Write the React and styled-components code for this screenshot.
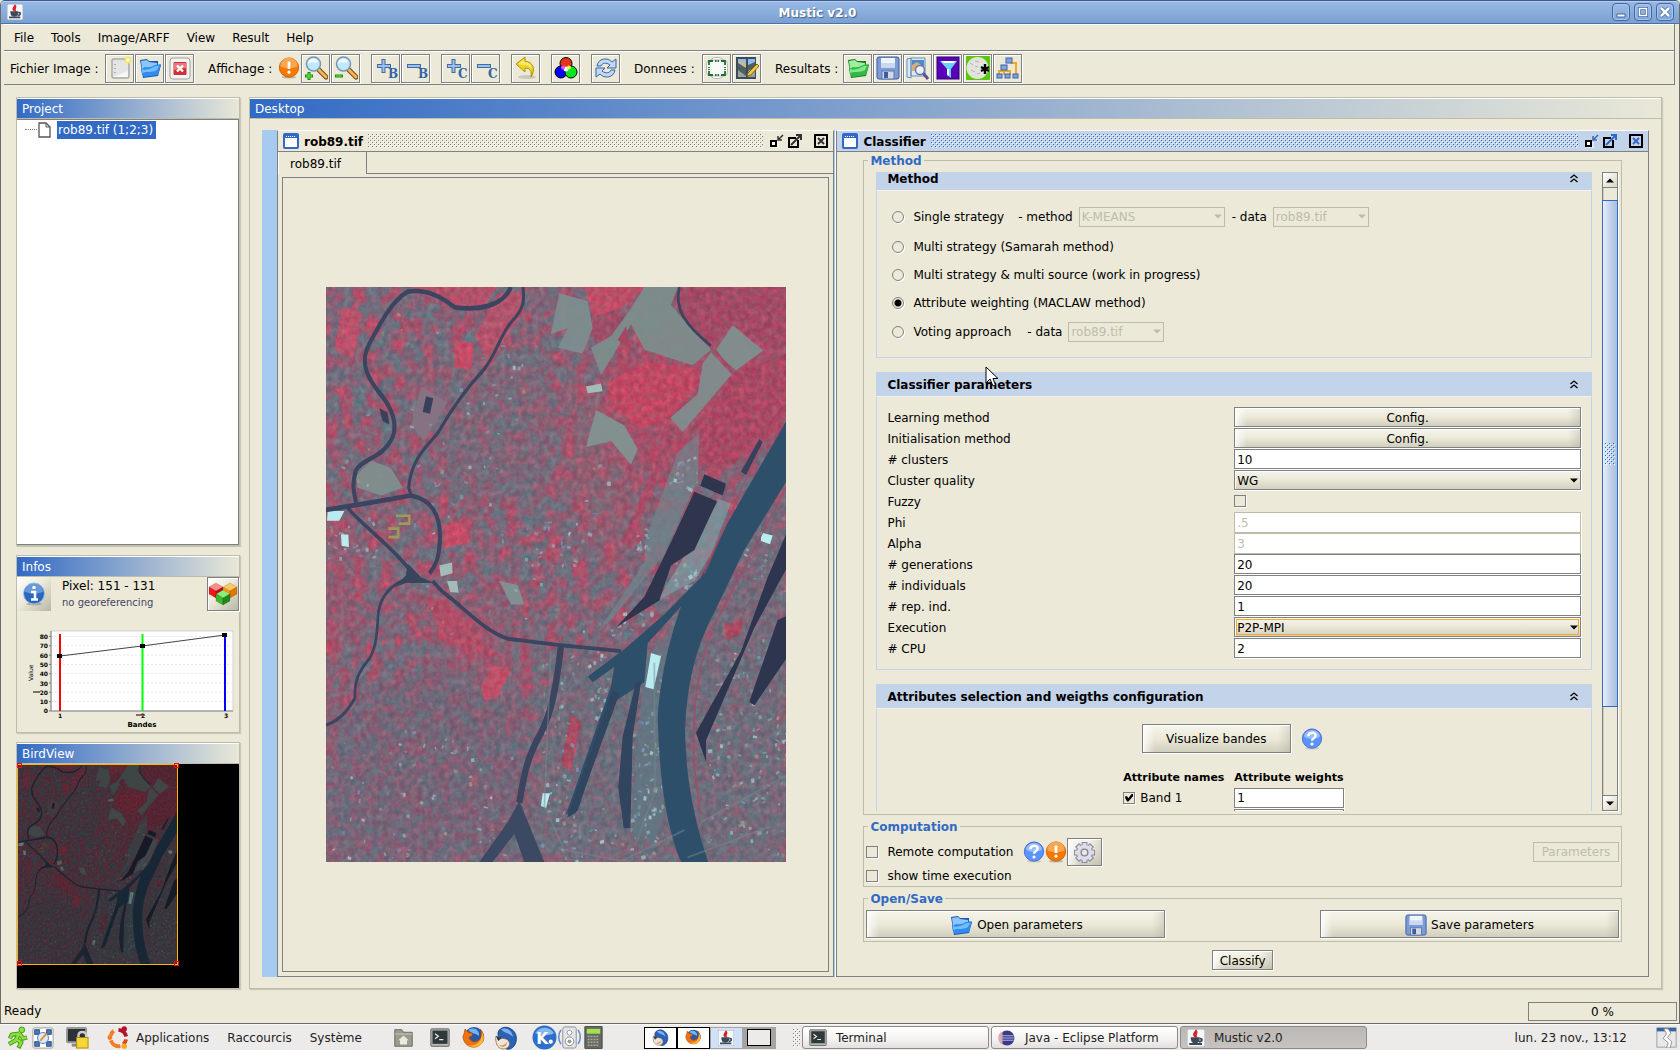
import React from "react";
import styled, { createGlobalStyle, css } from "styled-components";

const BG = "#ece9d8";
const GREY = "#808080";
const SOFT = "#bdbda9";
const BLUE = "#316ac5";
const PALE = "#c3d3e9";

const GlobalStyle = createGlobalStyle`
  *, *::before, *::after { box-sizing: border-box; }
  body { margin: 0; background: ${BG}; }
  body, button, input, select { font-family: "DejaVu Sans", sans-serif; font-size: 12px; line-height: 16px; color: #000; }
  svg { display: block; flex: none; }
`;

/* ---------- window ---------- */

const Screen = styled.div`
  display: flex;
  flex-direction: column;
  height: 100vh;
  min-height: 900px;
  background: ${BG};
`;

const Window = styled.div`
  flex: 1;
  min-height: 0;
  display: flex;
  flex-direction: column;
  border: 1px solid #6b6b6b;
  border-top: 1px solid #3f5a85;
  border-radius: 5px 5px 0 0;
`;

const TitleBar = styled.header`
  display: flex;
  align-items: center;
  height: 23px;
  padding: 0 5px 0 6px;
  border-bottom: 1px solid #4a71a8;
  border-radius: 4px 4px 0 0;
  background: linear-gradient(#9ab8e8, #8bafdb 45%, #7a9fd1);
  box-shadow: inset 0 1px 0 #b4cdf2;
`;

const TitleText = styled.h1`
  flex: 1;
  margin: 0;
  padding-top: 1px;
  text-align: center;
  font-size: 12px;
  line-height: 22px;
  color: #fff;
  text-shadow: 1px 1px 1px #41608f;
`;

const TitleButtons = styled.div`
  display: flex;
  gap: 4px;
`;

const TitleButton = styled.button`
  width: 18px;
  height: 18px;
  padding: 0;
  display: grid;
  place-items: center;
  border: 1px solid #4368a0;
  border-radius: 4px;
  background: linear-gradient(#9dbbe8, #7fa5d8);
  box-shadow: inset 0 0 0 1px #a9c4ec;
`;

const Bars = styled.div`
  margin: 0 4px 0 3px;
  border-right: 1px solid ${GREY};
`;

const MenuBar = styled.nav`
  display: flex;
  gap: 17px;
  height: 27px;
  padding: 5px 10px 0;
  border-top: 1px solid #fff;
  border-bottom: 1px solid ${GREY};
`;

const MenuItem = styled.a`
  color: #000;
  text-decoration: none;
`;

const ToolBar = styled.div`
  display: flex;
  align-items: center;
  height: 34px;
  padding-left: 6px;
  border-top: 1px solid #fff;
  border-bottom: 1px solid ${GREY};
`;

const ToolGroup = styled.div`
  display: flex;
  align-items: center;
  gap: 1px;
  margin-right: ${(p) => p.$after || 11}px;
`;

const ToolLabel = styled.span`
  width: ${(p) => p.$w}px;
  padding-top: 1px;
  white-space: nowrap;
`;

const bevel = css`
  border: 1px solid ${GREY};
  box-shadow: 1px 1px 0 #fff, inset 1px 1px 0 #fff;
`;

const ToolButton = styled.button`
  ${bevel}
  width: 29px;
  height: 29px;
  padding: 0;
  display: grid;
  place-items: center;
  background: ${BG};
`;

/* ---------- main panels ---------- */

const Main = styled.main`
  flex: 1;
  min-height: 0;
  display: grid;
  grid-template-columns: 224px minmax(0, 1fr);
  gap: 9px;
  padding: 12px 17px 6px 15px;
`;

const SideColumn = styled.div`
  min-height: 0;
  display: flex;
  flex-direction: column;
  gap: 9px;
`;

const Panel = styled.section`
  display: flex;
  flex-direction: column;
  flex: ${(p) => p.$flex || "none"};
  min-height: 0;
  min-width: 0;
  border: 1px solid ${SOFT};
  box-shadow: 1px 1px 1px #c9c7b6;
`;

const PanelTitle = styled.h2`
  margin: 0;
  height: 21px;
  padding: 2px 5px;
  border-top: 1px solid #fff;
  border-bottom: 1px solid ${SOFT};
  background: linear-gradient(90deg, ${BLUE}, #e9e8d8);
  color: #fff;
  font-size: 12px;
  font-weight: normal;
  line-height: 16px;
`;

const Tree = styled.div`
  flex: 1;
  display: flex;
  align-items: flex-start;
  padding: 1px 0 0 8px;
  background: #fff;
  border: 1px solid ${GREY};
  border-left: 0;
`;

const TreeStem = styled.span`
  width: 12px;
  margin-top: 8px;
  border-top: 1px dotted ${GREY};
`;

const TreeLabel = styled.span`
  margin-left: 5px;
  padding: 1px 3px 1px 1px;
  background: ${BLUE};
  border: 0;
  color: #fff;
`;

const InfoBody = styled.div`
  height: 155px;
  display: flex;
  flex-direction: column;
`;

const InfoTop = styled.div`
  display: flex;
  justify-content: space-between;
  height: 36px;
`;

const InfoIconBox = styled.div`
  width: 34px;
  height: 34px;
  display: grid;
  place-items: center;
  background: linear-gradient(135deg, #fff, #eceadb 45%, #b9b7a4);
`;

const CubeButton = styled.button`
  ${bevel}
  width: 32px;
  height: 34px;
  padding: 0;
  background: linear-gradient(135deg, #fff, #eceadb 45%, #b9b7a4);
`;

const InfoText = styled.div`
  flex: 1;
  padding: 1px 0 0 11px;
`;

const SmallNote = styled.div`
  font-size: 10px;
  line-height: 18px;
  color: #444466;
`;

const BirdBody = styled.div`
  height: 224px;
  background: #000;
`;

/* ---------- internal frames ---------- */

const DesktopArea = styled.div`
  flex: 1;
  min-height: 0;
  display: grid;
  grid-template-columns: minmax(0, 559fr) minmax(0, 812fr);
  margin: 11px 12px;
  border-left: 15px solid #a6caf0;
`;

const Frame = styled.article`
  display: flex;
  flex-direction: column;
  min-width: 0;
  min-height: 0;
  border: 1px solid ${GREY};
  border-top-color: #fff;
  margin-right: ${(p) => p.$gap || 0}px;
  box-shadow: ${(p) => (p.$gap ? "1px 0 0 #a6caf0, 2px 0 0 #fff" : "none")};
`;

const FrameTitle = styled.header`
  display: flex;
  align-items: center;
  height: 21px;
  padding: 0 5px;
  background: ${(p) => (p.$active ? PALE : BG)};
  border-bottom: 1px solid ${GREY};
`;

const FrameName = styled.h3`
  margin: 0 5px;
  padding-top: 1px;
  font-size: 12px;
  line-height: 16px;
`;

const Grip = styled.div`
  flex: 1;
  height: 14px;
  margin-right: 7px;
  --d: ${(p) => (p.$active ? BLUE : GREY)};
  background-image:
    conic-gradient(from 270deg at 1px 1px, var(--d) 90deg, transparent 0),
    conic-gradient(from 270deg at 1px 1px, var(--d) 90deg, transparent 0),
    conic-gradient(from 270deg at 1px 1px, #fff 90deg, transparent 0),
    conic-gradient(from 270deg at 1px 1px, #fff 90deg, transparent 0);
  background-size: 4px 4px;
  background-position: 0 0, 2px 2px, 1px 1px, 3px 3px;
`;

const FrameButton = styled.button`
  width: 14px;
  height: 14px;
  padding: 0;
  margin-left: ${(p) => p.$gap || 0}px;
  border: 0;
  background: none;
`;

const TabStrip = styled.div`
  display: flex;
  height: 22px;
`;

const Tab = styled.button`
  width: 89px;
  padding: 2px 0 0 11px;
  text-align: left;
  border: 0;
  border-right: 1px solid ${GREY};
  border-left: 1px solid #fff;
  background: ${BG};
`;

const TabRest = styled.div`
  flex: 1;
  border-bottom: 1px solid ${GREY};
`;

const ImagePane = styled.div`
  flex: 1;
  min-height: 0;
  display: grid;
  place-items: center;
  margin: 3px 4px 4px;
  border: 1px solid ${GREY};
`;

const ClassifierBody = styled.form`
  flex: 1;
  min-height: 0;
  display: flex;
  flex-direction: column;
  gap: 4px;
  padding: 1px 26px 6px;
`;

const Group = styled.fieldset`
  flex: ${(p) => (p.$grow ? "1" : "none")};
  min-height: 0;
  min-width: 0;
  margin: 0;
  padding: ${(p) => p.$pad};
  border: 1px solid ${SOFT};
  display: flex;
  flex-direction: ${(p) => (p.$row ? "row" : "column")};
  justify-content: ${(p) => (p.$row ? "space-between" : "normal")};
`;

const GroupTitle = styled.legend`
  margin-left: 2px;
  padding: 1px 2px 0;
  font-weight: bold;
  line-height: 14px;
  color: ${BLUE};
`;

const Viewport = styled.div`
  flex: 1;
  min-width: 0;
  margin-left: 10px;
  overflow: hidden;
`;

const Scrolled = styled.div`
  margin-top: -6px;
  display: flex;
  flex-direction: column;
  gap: 14px;
`;

const Section = styled.section`
  position: relative;
`;

const SectionHead = styled.header`
  display: flex;
  align-items: center;
  justify-content: space-between;
  height: 24px;
  padding: 0 14px 0 11px;
  background: ${PALE};
  border-bottom: 0;
`;

const SectionName = styled.h4`
  margin: 0;
  padding-top: 1px;
  font-size: 12px;
  line-height: 16px;
`;

const Chevron = styled.button`
  padding: 0;
  border: 0;
  background: none;
`;

const SectionBody = styled.div`
  padding: 10px;
  border: 1px solid ${PALE};
  border-top: 1px solid #f4f2e8;
`;

const RadioRow = styled.div`
  display: flex;
  align-items: center;
  height: ${(p) => p.$h || 28}px;
  padding-left: 5px;
`;

const RadioLabel = styled.label`
  display: flex;
  align-items: center;
  gap: 9px;
  padding-top: 1px;
`;

const Radio = styled.input`
  appearance: none;
  width: 12px;
  height: 12px;
  margin: 0;
  border: 1px solid ${GREY};
  border-radius: 50%;
  background: ${BG};
  box-shadow: 1px 1px 0 #fff;
  &:checked { background: radial-gradient(#000 0 3px, ${BG} 4px); }
`;

const Inline = styled.label`
  margin: 0 6px 0 ${(p) => p.$left || 14}px;
`;

const SelectBox = styled.span`
  display: inline-grid;
  width: ${(p) => p.$w || "100%"};
  height: 20px;
  align-items: center;
  & > * { grid-area: 1 / 1; }
  & > svg { justify-self: end; margin-right: 3px; pointer-events: none; }
`;

const SelectField = styled.select`
  appearance: none;
  width: 100%;
  height: 20px;
  padding: 1px 3px 0 2px;
  margin: 0;
  border: 1px solid ${GREY};
  border-radius: 0;
  background: linear-gradient(#f6f5ec, ${BG} 45%, #d3d0c0);
  box-shadow: 1px 1px 0 #fff, inset 1px 1px 0 #fff;
  outline: ${(p) => (p.$focused ? "1px solid #f7a81c" : "none")};
  outline-offset: -3px;
  &:disabled { color: ${SOFT}; border-color: ${SOFT}; background: ${BG}; box-shadow: none; opacity: 1; }
`;

const ParamGrid = styled.div`
  display: grid;
  grid-template-columns: 1fr 1fr;
  grid-auto-rows: 21px;
`;

const ParamLabel = styled.label`
  line-height: 22px;
`;

const TextField = styled.input`
  width: ${(p) => p.$w || "100%"};
  height: 20px;
  margin: 0;
  padding: 1px 2px 0;
  border: 1px solid ${GREY};
  background: #fff;
  box-shadow: 1px 1px 0 #fff;
  outline: 0;
  &:disabled { color: ${SOFT}; border-color: ${SOFT}; height: 21px; }
`;

const Check = styled.input`
  appearance: none;
  flex: none;
  width: 12px;
  height: 12px;
  margin: 0;
  border: 1px solid ${GREY};
  background: ${BG};
  box-shadow: 1px 1px 0 #fff;
  display: grid;
  place-items: center;
  &:checked::before {
    content: "";
    width: 8px;
    height: 8px;
    background: #000;
    clip-path: polygon(0 35%, 25% 35%, 38% 60%, 85% 0, 100% 10%, 100% 30%, 40% 100%, 25% 100%, 0 60%);
  }
`;

const CheckCell = styled.div`
  display: flex;
  align-items: center;
  height: 20px;
`;

const PushButton = styled.button`
  ${bevel}
  display: flex;
  align-items: center;
  justify-content: center;
  gap: 4px;
  width: ${(p) => p.$w || "100%"};
  height: ${(p) => p.$h || 20}px;
  padding: 1px 0 0;
  align-self: ${(p) => (p.$center ? "center" : "auto")};
  margin-top: ${(p) => (p.$center ? 4 : 0)}px;
  background: linear-gradient(90deg, #fffc, #fff0 12px calc(100% - 12px), #a8a69455), linear-gradient(#f6f5ec, ${BG} 50%, #d0cebd);
  &:disabled { color: ${SOFT}; border-color: ${SOFT}; background: ${BG}; box-shadow: none; }
`;

const VisualizeRow = styled.div`
  display: flex;
  justify-content: center;
  align-items: center;
  gap: 10px;
  padding: 5px 4px 15px 0;
`;

const WeightTable = styled.table`
  margin: 0 auto;
  border-collapse: collapse;
  th { width: 111px; padding: 1px 0 0; font-size: 11px; line-height: 18px; text-align: left; white-space: nowrap; }
  td { padding: 0; height: 21px; }
`;

const BandLabel = styled.label`
  display: flex;
  align-items: center;
  gap: 5px;
`;

const ScrollTrack = styled.div`
  display: flex;
  flex-direction: column;
  width: 16px;
  margin-left: 10px;
  border: 1px solid ${GREY};
  box-shadow: 1px 1px 0 #fff, inset 1px 0 0 #cfcdbd;
`;

const ScrollArrow = styled.button`
  height: 15px;
  padding: 0;
  display: grid;
  place-items: center;
  border: 0;
  border-bottom: ${(p) => (p.$down ? 0 : 1)}px solid ${GREY};
  border-top: ${(p) => (p.$down ? 1 : 0)}px solid ${GREY};
  background: linear-gradient(135deg, #fff, #d8d6c4);
`;

const ScrollThumb = styled.div`
  flex: 507;
  margin: 12px -1px 0;
  display: grid;
  place-items: center;
  border: 1px solid ${BLUE};
  background: linear-gradient(90deg, #e8f0fa, #c3d3e9 50%, #a9bfdf);
`;

const ThumbGrip = styled(Grip)`
  width: 10px;
  height: 22px;
  margin: 0;
`;

const ScrollRest = styled.div`
  flex: 88;
`;

const ComputeRow = styled.div`
  display: flex;
  align-items: center;
  height: ${(p) => p.$h}px;
`;

const ComputeLabel = styled.label`
  display: flex;
  align-items: center;
  gap: 9px;
  margin-right: 10px;
  padding-top: 1px;
`;

const PushRight = styled.span`
  flex: 1;
`;

const Pointer = styled.svg`
  position: absolute;
  left: 109px;
  top: -6px;
`;

/* ---------- status and desktop bar ---------- */

const StatusBar = styled.footer`
  display: flex;
  align-items: flex-end;
  justify-content: space-between;
  height: 26px;
  padding: 0 2px 0 3px;
  margin-bottom: 2px;
  line-height: 19px;
`;

const Progress = styled.div`
  width: 149px;
  height: 19px;
  border: 1px solid ${GREY};
  text-align: center;
  line-height: 18px;
`;

const Taskbar = styled.footer`
  display: flex;
  align-items: center;
  height: 26px;
  padding: 0 3px 0 6px;
  border-top: 1px solid #fafafa;
  background: #edebea;
`;

const Tray = styled.div`
  display: flex;
  align-items: center;
  gap: ${(p) => p.$gap || 0}px;
  margin-right: ${(p) => p.$after}px;
`;

const TaskLink = styled.a`
  display: flex;
  align-items: center;
  gap: 6px;
  color: #222;
  text-decoration: none;
`;

const PagerCell = styled.div`
  width: 33px;
  height: 22px;
  display: grid;
  place-items: center;
  border: 1px solid ${(p) => (p.$soft ? "#a6a4a2" : "#000")};
  background: ${(p) => p.$bg || "#fff"};
`;

const EmptyDesk = styled.span`
  width: 24px;
  height: 17px;
  border: 1px solid #000;
  background: #edebea;
`;

const Handle = styled(Grip)`
  flex: none;
  width: 7px;
  height: 18px;
  margin: 0 2px 0 0;
`;

const Task = styled.button`
  flex: 0 1 187px;
  height: 23px;
  margin-right: 2px;
  padding: 0 0 0 6px;
  display: flex;
  align-items: center;
  gap: 9px;
  color: #222;
  border: 1px solid #8d8a87;
  border-radius: 3px;
  background: ${(p) => (p.$active ? "linear-gradient(#bab7b4, #c6c3c0)" : "linear-gradient(#fff, #f3f2f1 60%, #e2e0de)")};
`;

const Clock = styled.time`
  margin-left: auto;
  margin-right: 29px;
  color: #222;
`;

/* ---------- small drawings ---------- */

const Arrow = ({ up, c = "#000" }) => (
  <svg width="8" height="5" viewBox="0 0 8 5"><path d={up ? "M0 4.5h8L4 .5z" : "M0 .5h8L4 4.5z"} fill={c} /></svg>
);

const Svg = ({ s = 24, children }) => <svg width={s} height={s} viewBox="0 0 24 24" fill="none">{children}</svg>;

const NewIcon = () => (
  <Svg><rect x="4" y="3" width="17" height="19" rx="1" fill="#e4e4e4" stroke="#8d8d8d" /><path d="M5 21h15v-6z" fill="#f7f7f7" /><circle cx="20" cy="4" r="3.4" fill="#f5e769" /><circle cx="20" cy="4" r="1.5" fill="#fff" /><path d="M7 8v1m0 3v1m0 3v1" stroke="#777" /></Svg>
);
const FolderIcon = ({ c1 = "#2f8cf0", c2 = "#8cc6ff", c3 = "#1a57b0" }) => (
  <Svg><path d="M2 4l7-1 2 2 9 0v4l3 0-3 11-15 2z" fill={c3} /><path d="M3 5l6-1 2 2 8 1v9L5 20z" fill={c2} /><path d="M7 11c5 1 8-1 10-2l6-1-3 11-14 2C3 18 3 13 3 13z" fill={c1} /><path d="M4 13c5 2 9-1 14-3l3 0-2 4c-5 3-10 1-15 3z" fill={c2} opacity=".8" /></Svg>
);
const CloseIcon = () => (
  <Svg><rect x="2" y="2" width="20" height="21" rx="3" fill="#f4f4f4" stroke="#a0a0a0" /><rect x="5.500" y="6" width="13" height="13" rx="1" fill="#cc2f35" /><path d="M6 7h12v5L6 14z" fill="#ea777b" /><path d="M9 9.500l6 6m0-6l-6 6" stroke="#fff" strokeWidth="2.400" /></Svg>
);
const WarnIcon = ({ s = 22 }) => (
  <Svg s={s}><ellipse cx="12" cy="22" rx="8" ry="1.5" fill="#0003" /><circle cx="12" cy="11.5" r="10.5" fill="#f57900" stroke="#ce5c00" /><path d="M2.500 10a9.500 9.500 0 0 1 19 0c-6 3-13 3-19 0z" fill="#ffb66b" opacity=".75" /><path d="M12 5v8" stroke="#fff" strokeWidth="3" /><circle cx="12" cy="16.500" r="1.700" fill="#fff" /></Svg>
);
const HelpIcon = ({ s = 22 }) => (
  <Svg s={s}><ellipse cx="12" cy="22" rx="8" ry="1.5" fill="#0002" /><circle cx="12" cy="11.500" r="10.500" fill="#5b94ff" stroke="#3c62d8" /><path d="M3 9a9.500 9.500 0 0 1 18 0c-5 4-13 4-18 0z" fill="#a9c8ff" opacity=".8" /><path d="M8 9c0-5 8-5 8-1 0 3-4 3-4 6" stroke="#fff" strokeWidth="2.600" /><circle cx="12" cy="17.500" r="1.700" fill="#fff" /></Svg>
);
const ZoomIcon = ({ minus }) => (
  <Svg><path d="M14 13l8 8" stroke="#7a4a18" strokeWidth="5" strokeLinecap="round" /><path d="M15 14l7 7" stroke="#f5b555" strokeWidth="2.800" strokeLinecap="round" /><circle cx="9.500" cy="8" r="7" fill="#bfe8fb" stroke="#7796b5" strokeWidth="1.500" /><path d="M4 8c0-6 9-7 10-2-3 2-6-1-10 2z" fill="#fff" opacity=".8" /><path d={minus ? "M1 20h8" : "M1 20h8M5 16v8"} stroke="#178d10" strokeWidth="3" /><path d={minus ? "M2 20h6" : "M2 20h6M5 17v6"} stroke="#73f04c" /></Svg>
);
const SignIcon = ({ minus, letter }) => (
  <Svg><path d={minus ? "M3 10h14" : "M3 10h14M9.500 3v14"} stroke="#3f6ca8" strokeWidth="4" /><path d={minus ? "M4 10h12" : "M4 10h12M9.500 4v12"} stroke="#9fc0e6" strokeWidth="2" /><text x="14" y="22" fontSize="12" fontFamily="DejaVu Serif" fontWeight="bold" fill="#3465a4">{letter}</text></Svg>
);
const UndoIcon = () => (
  <Svg><ellipse cx="13" cy="21" rx="9" ry="2" fill="#0002" /><path d="M2 8l9-7v4c8 1 11 8 6 16 1-6-1-9-6-9v4z" fill="#f0d321" stroke="#b09000" /><path d="M4 8l6-5v3c5 0 8 3 8 7-3-4-6-4-9-4z" fill="#fff7a0" opacity=".6" /></Svg>
);
const RgbIcon = () => (
  <Svg><g stroke="#000"><circle cx="12" cy="7.500" r="6" fill="#e4341c" /><circle cx="7" cy="16" r="6" fill="#0000f4" /><circle cx="17" cy="16" r="6" fill="#00e81b" /></g><circle cx="12" cy="13" r="2.500" fill="#fff" /><circle cx="9" cy="11.500" r="2" fill="#f04cf0" /><circle cx="15" cy="11.500" r="2" fill="#f4f04c" /></Svg>
);
const RefreshIcon = () => (
  <Svg><path d="M3 10C4 2 14 1 18 6l4-3v9h-9l3-3C12 6 8 7 7 10z" fill="#c3d8f2" stroke="#3465a4" /><path d="M21 14c-1 8-11 9-15 4l-4 3v-9h9l-3 3c4 3 8 2 9-1z" fill="#c3d8f2" stroke="#3465a4" /></Svg>
);
const SelectAreaIcon = () => (
  <Svg><rect x="6" y="1.500" width="12" height="21" rx="4" fill="#fafaf8" stroke="#bbb" /><rect x="1.500" y="4" width="21" height="16" rx="4" fill="#fafaf8cc" stroke="#bbb" /><path d="M4 9V5h4M16 5h4v4M20 15v4h-4M8 19H4v-4M10 5h1.500m1 0H14M10 19h1.500m1 0H14M4 11v1m0 1v1M20 11v1m0 1v1" stroke="#1d6d3c" strokeWidth="1.800" /></Svg>
);
const PictureEditIcon = () => (
  <Svg><rect x="1" y="1" width="20" height="22" fill="#3d4a58" /><path d="M3 3h8v8H3zM13 3h7v8h-7z" fill="#8fbcec" /><path d="M13 13h7v8h-7zM3 13h8v8H3z" fill="#98a49c" /><path d="M3 7l8 5v8l-8-6zM13 9l7-3v5l-7 4z" fill="#4e5f5f" /><path d="M3 6l4-1 4 4v3z" fill="#d9b878" /><path d="M22 8l-9 9-1 3 4-1 8-9z" fill="#f3c845" stroke="#8a6514" /></Svg>
);
const DiskIcon = ({ s = 24 }) => (
  <Svg s={s}><rect x="1" y="1" width="22" height="22" rx="2" fill="#7d9bd4" stroke="#3c5ca8" /><rect x="5" y="2" width="14" height="10" fill="#eef4fb" /><path d="M5 7h14v5H5z" fill="#c9daf0" /><rect x="6" y="15" width="12" height="8" fill="#d6d8dc" stroke="#5a78b8" /><rect x="8" y="16" width="4" height="6" fill="#3d5c9f" /></Svg>
);
const BrowseIcon = () => (
  <Svg><path d="M1 3l4-1v20l-4-1zM5 2h14v18H5z" fill="#dbe8f5" stroke="#6b8fb8" /><path d="M6 4h12v10H6z" fill="#4b8bc8" /><path d="M6 9l5-3 7 5v4H6z" fill="#d7ae7b" /><path d="M17 17l5 6" stroke="#5f4f90" strokeWidth="3" /><circle cx="14" cy="14" r="4.500" fill="#e8f1fc" stroke="#6b77a8" strokeWidth="1.500" /></Svg>
);
const FilterIcon = () => (
  <Svg><rect x="1" y="1" width="22" height="22" fill="#5a00b8" stroke="#31007a" /><path d="M4 5h17l-6 8v9l-4-3v-6z" fill="#69d2fb" /><path d="M5 5h15l-3 2H8z" fill="#fff" /><path d="M11 13h2v7l-2-1z" fill="#e8fbff" /></Svg>
);
const GlobeCutIcon = () => (
  <Svg><rect width="24" height="24" rx="1" fill="#5cc60a" /><circle cx="11.500" cy="12" r="11" fill="#e3e3dd" /><path d="M4 7l3 2M9 5l4 1M5 14l4 2M11 18l3-1M9 10l3 1" stroke="#b5b5ac" /><path d="M19 8v10m-4-7l8 4m-8 0l8-4" stroke="#000" strokeWidth="2.400" /></Svg>
);
const TreeIcon = () => (
  <Svg><path d="M8 12v7M3 19v-4h11v4M15 7h5v11" stroke="#f4a820" strokeWidth="2" /><g fill="#7ea5e0" stroke="#3b62a5"><rect x="10" y="2" width="6" height="5" /><rect x="5" y="9" width="6" height="5" /><rect x="1" y="18" width="5" height="4" /><rect x="9" y="18" width="5" height="4" /><rect x="17" y="18" width="5" height="4" /></g></Svg>
);
const GearIcon = () => (
  <Svg s={23}><g stroke="#8587a0" strokeWidth="6"><path d="M12 1v22M1 12h22M4.200 4.200l15.600 15.600M19.800 4.200L4.200 19.800" /></g><circle cx="12" cy="12" r="9" fill="#8587a0" /><g stroke="#dcdde9" strokeWidth="4"><path d="M12 2v20M2 12h20M5 5l14 14M19 5L5 19" /></g><circle cx="12" cy="12" r="8" fill="#dcdde9" /><circle cx="12" cy="12" r="3.500" fill={BG} stroke="#8587a0" strokeWidth="1.500" /></Svg>
);
const JavaIcon = ({ s = 16 }) => (
  <Svg s={s}><rect width="24" height="24" rx="2" fill="#f5f7f8" stroke="#80939c" /><path d="M5 11h12c0 6-2 8-6 8s-6-2-6-8z" fill="#3a4a58" /><path d="M17 13c4-1 4 4-1 4M3 20h17" stroke="#3a4a58" strokeWidth="2.500" /><path d="M12 2c4 4-3 5 1 9-6-2-4-5-1-9z" fill="#d82222" stroke="#d82222" strokeWidth="2" /></Svg>
);
const FrameIcon = () => (
  <svg width="16" height="16" viewBox="0 0 16 16"><rect x="1" y="1" width="14" height="14" rx="1" fill="#fff" stroke={BLUE} strokeWidth="2" /><path d="M1 1h14v4H1z" fill={BLUE} /><path d="M3 3.500h10" stroke="#fff" strokeDasharray="1 1" /></svg>
);
const MinFrame = ({ c }) => (
  <svg width="14" height="14" viewBox="0 0 14 14" fill="none"><path d="M2 14h6V8M8 6.500h5" stroke="#fff" /><rect x="1" y="7" width="5" height="5" stroke="#000" strokeWidth="2" fill="#fff" /><path d="M13 1L9 5M8 2v4h4" stroke={c} strokeWidth="1.500" /></svg>
);
const MaxFrame = ({ c }) => (
  <svg width="14" height="14" viewBox="0 0 14 14" fill="none"><path d="M8 4H1v9h9V6" stroke="#000" strokeWidth="2" /><path d="M3 11L13 1M8 1h5v5" stroke={c} strokeWidth="2" /></svg>
);
const CloseFrame = ({ c }) => (
  <svg width="14" height="14" viewBox="0 0 14 14" fill="none"><rect x="1" y="1" width="12" height="12" stroke="#000" strokeWidth="2" /><path d="M4 4l6 6m0-6l-6 6" stroke={c} strokeWidth="2" /></svg>
);
const ChevronsUp = () => (
  <svg width="8" height="9" viewBox="0 0 8 9" fill="none" stroke="#000" strokeWidth="1.300"><path d="M.5 4L4 1l3.500 3M.5 8L4 5l3.500 3" /></svg>
);
const Cubes = () => {
  const cube = (x, y, a, b, c) => (
    <g transform={`translate(${x} ${y})`} stroke="#0004" strokeWidth=".5"><path d="M7 0l7 4-7 4-7-4z" fill={a} /><path d="M0 4l7 4v7l-7-4z" fill={b} /><path d="M14 4l-7 4v7l7-4z" fill={c} /></g>
  );
  return <svg width="30" height="32" viewBox="0 0 30 32">{cube(1, 5, "#ff8a8a", "#f01818", "#c00c10")}{cube(15, 5, "#ffc860", "#ff9a10", "#e07800")}{cube(8, 12, "#8cec7c", "#3cb82c", "#1d8a18")}</svg>;
};
const InfoIcon = () => (
  <Svg><ellipse cx="12" cy="22" rx="8" ry="1.500" fill="#0003" /><circle cx="12" cy="11.500" r="10.500" fill="#2b67bd" stroke="#9ebee8" /><path d="M3 10a9 9 0 0 1 18 0c-6 2-12 2-18 0z" fill="#84aee6" opacity=".7" /><circle cx="12" cy="5.500" r="1.800" fill="#fff" /><path d="M9 10h4v7M9 17.500h7" stroke="#fff" strokeWidth="2.500" /></Svg>
);

/* dock drawings */
const Runner = () => (<Svg s={23}><g strokeLinejoin="round"><path d="M14 8L6 9l-2 4M14 8l4 5 4-1M13 9l-3 6-7 4M11 14l5 3-3 6" stroke="#4a9a22" strokeWidth="4.500" /><path d="M14 8L6 9l-1.500 3.500M14 8l4 5 3.500-1M13 9l-3 6-6.500 3.500M11 14l5 3-2.500 5" stroke="#8ae234" strokeWidth="2.500" /></g><circle cx="16.500" cy="4" r="3" fill="#8ae234" stroke="#4a9a22" /></Svg>);
const Capture = () => (<Svg s={22}><rect x="1" y="1" width="22" height="22" rx="2" fill="#fff" stroke="#999" /><g fill="#4b78b8" stroke="#24487f"><rect x="3" y="3" width="5" height="5" /><rect x="16" y="3" width="5" height="5" /><rect x="3" y="16" width="5" height="5" /><rect x="16" y="16" width="5" height="5" /></g><circle cx="12" cy="12" r="6" fill="#dcebf8" stroke="#4b78b8" /><path d="M9 15l7-8" stroke="#e28c22" strokeWidth="2" /></Svg>);
const LockScreen = () => (<Svg s={23}><rect x="1" y="2" width="20" height="15" rx="1" fill="#2b3336" stroke="#999" strokeWidth="2" /><path d="M6 20h7" stroke="#888" strokeWidth="3" /><path d="M13 13v-3c0-5 8-5 8 0v3" stroke="#ccc" strokeWidth="2.500" /><rect x="11" y="12" width="12" height="11" fill="#f6d636" stroke="#ad8a00" /></Svg>);
const Ubuntu = () => (<Svg s={23}><path d="M7 5a9 9 0 0 0-3 5M4 15a9 9 0 0 0 10 6" stroke="#f47b20" strokeWidth="4" /><path d="M12 4a9 9 0 0 1 8 7" stroke="#b5122b" strokeWidth="4" /><path d="M20 14a9 9 0 0 1-3 5" stroke="#de4814" strokeWidth="4" /><circle cx="3" cy="12" r="2.500" fill="#f47b20" /><circle cx="18" cy="3" r="2.800" fill="#b5122b" /><circle cx="18" cy="21" r="2.800" fill="#f5a623" /></Svg>);
const HomeFolder = () => (<Svg s={21}><path d="M2 3h8l2 3h10v16H2z" fill="#9a9c8c" stroke="#63655a" /><path d="M2 8h20" stroke="#c9cbbd" /><path d="M12 10l6 5h-2v5H8v-5H6z" fill="#e9ebdf" /></Svg>);
const Term = ({ s = 20 }) => (<Svg s={s}><rect x="1" y="1" width="22" height="21" rx="1" fill="#b5b7b0" stroke="#555" /><rect x="3" y="3" width="18" height="16" fill="#30393a" /><path d="M6 7l4 3-4 3M11 14h5" stroke="#e5ebe8" strokeWidth="1.500" /></Svg>);
const Fox = ({ s = 24 }) => (<Svg s={s}><circle cx="12" cy="11" r="10" fill="#2c58a5" /><path d="M6 4c6-4 12 0 11 6-4-3-7-2-11-6z" fill="#6cb6ef" /><path d="M2 8L3 3l4 4c3-1 4 1 3 3l-3 1c1 6 9 7 12 0 1-3 0-5-1-8 5 5 5 12 0 16-6 5-17 1-17-9z" fill="#ef7411" stroke="#b74205" strokeWidth=".7" /><path d="M20 6c3 5 2 11-3 14-4 2-8 1-11-1 8 2 14-3 14-13z" fill="#fbb53a" /></Svg>);
const Bird = ({ s = 24 }) => (<Svg s={s}><path d="M4 9C3 2 12-1 17 3c6 3 7 12 3 17-3 4-7 4-9 2 4-2 5-5 3-8-3-3-9 0-10-5z" fill="#2a62b8" stroke="#12386f" strokeWidth=".8" /><path d="M2 10c2 2 6 2 10 3 4 2 5 6 1 9-3 2-8 1-10-3-1-3-2-6-1-9z" fill="#f0e4d4" stroke="#8e6f50" strokeWidth=".8" /><path d="M7 3c5-2 11 1 12 8-3-4-8-3-12-8z" fill="#7fb0ee" /><path d="M2 10l6 2-4 3z" fill="#2d3b52" /><path d="M5 19c3 1 6 0 8-3 0 4-4 7-8 3z" fill="#c89a66" /></Svg>);
const KIcon = () => (<Svg s={25}><circle cx="12" cy="12" r="11.500" fill="#2d6fcb" /><path d="M3 8c5-8 15-6 18 0-6 3-12 2-18 0z" fill="#89b8ed" /><text x="4" y="18" fontSize="15" fontFamily="DejaVu Sans" fontWeight="bold" fill="#fff">K</text><circle cx="18" cy="16" r="2" fill="#fff" /></Svg>);
const Speaker = () => (<Svg s={23}><rect x="5" y="1" width="14" height="22" rx="2" fill="#e4e5e8" stroke="#8d9199" /><circle cx="12" cy="7" r="2.500" stroke="#999" fill="#fff" /><circle cx="12" cy="16" r="4.500" stroke="#888" fill="#fff" /><circle cx="12" cy="16" r="2" fill="#999" /><path d="M3 4c-3 5-3 10 0 15M21 4c3 5 3 10 0 15" stroke="#5d89d0" strokeWidth="1.500" /></Svg>);
const Calc = () => (<Svg s={23}><rect x="3" y="0" width="18" height="24" rx="1" fill="#666960" stroke="#444" /><rect x="5" y="3" width="14" height="5" fill="#a4e34d" /><path d="M6 11h12M6 14h12M6 17h12M6 20h12" stroke="#a9aba4" strokeWidth="1.500" strokeDasharray="2 1" /></Svg>);
const Eclipse = () => (<Svg s={18}><circle cx="12" cy="12" r="10" fill="#3c3a86" /><path d="M6 3a10 10 0 0 0 0 18z" fill="#e8a3a6" /><path d="M3 9h18M2 12h20M3 15h18" stroke="#aab3e4" strokeWidth="1.500" /></Svg>);
const Torn = () => (<Svg s={21}><rect x="1" y="1" width="22" height="22" fill="#e8e8e8" stroke="#999" /><path d="M1 1h22v4H1z" fill="#3465a4" /><path d="M9 2l3 6-4 5 6 5-2 6h4l2-7-5-5 4-5-3-5z" fill="#fff" stroke="#888" /></Svg>);

/* ---------- false-colour satellite view ---------- */

const specks = (() => {
  let seed = 7;
  const rnd = () => ((seed = (seed * 16807) % 2147483647) / 2147483647);
  const out = [];
  const zones = [
    [50, 620, 200, 750, 26], [640, 650, 810, 760, 22], [690, 990, 800, 1520, 52], [830, 980, 900, 1150, 22],
    [960, 990, 1060, 1450, 60], [1160, 950, 1425, 1240, 60], [1070, 480, 1160, 560, 20], [970, 660, 1010, 720, 14],
    [1080, 750, 1160, 820, 26], [1260, 600, 1425, 830, 20], [60, 1180, 600, 1510, 70], [1190, 1240, 1425, 1510, 50],
    [780, 1380, 1040, 1510, 34], [60, 100, 640, 560, 40], [300, 500, 900, 950, 40], [860, 850, 1030, 940, 22],
  ];
  const tones = ["#b9e4e8", "#9ccfd4", "#8db5b2", "#a9c9d8", "#7fa6d8", "#a7a98f"];
  zones.forEach(([x1, y1, x2, y2, n]) => {
    for (let i = 0; i < n; i += 1) {
      out.push({ x: x1 + rnd() * (x2 - x1), y: y1 + rnd() * (y2 - y1), w: 4 + rnd() * 9, h: 3 + rnd() * 8, c: tones[Math.floor(rnd() * 6)], o: 0.25 + rnd() * 0.45, r: rnd() * 60 - 30 });
    }
  });
  return out;
})();

const Satellite = ({ id, width, height, dim }) => (
  <svg width={width} height={height} viewBox="45 44 1380 1478" preserveAspectRatio="none" fill="none" role="img" aria-label="rob89.tif">
    <defs>
      <filter id={`${id}a`} x="0" y="0" width="100%" height="100%" colorInterpolationFilters="sRGB">
        <feTurbulence type="fractalNoise" baseFrequency="0.024" numOctaves="5" seed="4" />
        <feColorMatrix values="1 0 0 0 0  1 0 0 0 0  1 0 0 0 0  0 0 0 0 1" />
        <feComponentTransfer>
          <feFuncR type="table" tableValues=".36 .37 .38 .42 .52 .66 .78 .84 .84" />
          <feFuncG type="table" tableValues=".52 .50 .48 .45 .39 .32 .28 .27 .27" />
          <feFuncB type="table" tableValues=".56 .54 .53 .51 .47 .42 .39 .38 .38" />
        </feComponentTransfer>
      </filter>
      <filter id={`${id}b`} x="0" y="0" width="100%" height="100%" colorInterpolationFilters="sRGB">
        <feTurbulence type="fractalNoise" baseFrequency="0.06" numOctaves="3" seed="11" />
        <feColorMatrix values="1 0 0 0 0  0 1 0 0 0  .4 .6 0 0 0  0 0 0 0 1" />
        <feComponentTransfer>
          <feFuncR type="table" tableValues=".22 .26 .32 .38 .50 .64 .80 .84 .84" />
          <feFuncG type="table" tableValues=".20 .22 .26 .32 .40 .48 .56 .60 .60" />
          <feFuncB type="table" tableValues=".26 .30 .34 .40 .47 .54 .60 .64 .64" />
        </feComponentTransfer>
      </filter>
      <filter id={`${id}s`} x="-5%" y="-5%" width="110%" height="110%"><feGaussianBlur stdDeviation="2" /></filter>
      <filter id={`${id}t`} x="-20%" y="-20%" width="140%" height="140%"><feGaussianBlur stdDeviation="24" /></filter>
      <clipPath id={`${id}c`}><rect x="45" y="44" width="1380" height="1478" /></clipPath>
    </defs>
    <g clipPath={`url(#${id}c)`}>
      <rect x="45" y="44" width="1380" height="1478" filter={`url(#${id}a)`} />
      <g filter={`url(#${id}t)`}>
        <path d="M45 1160L200 1060 420 1000 660 1100 620 1522H45z" fill="#67687a" opacity=".6" />
        <path d="M720 990H1425V1522H640z" fill="#62737f" opacity=".75" />
        <path d="M1425 560V1000H1100L1240 800z" fill="#68717d" opacity=".7" />
        <path d="M450 200L700 180 720 600 400 560 360 420z" fill="#706e7c" opacity=".5" />
        <path d="M860 240L1180 60 1425 44V440L1180 520 960 520z" fill="#c83a5a" opacity=".65" />
        <path d="M760 260L950 380 980 620 900 780 740 560z" fill="#b05468" opacity=".4" />
        <path d="M45 600L120 640 130 960 45 1000zM330 830L560 860 620 1080 420 1010z" fill="#bd4863" opacity=".5" />
      </g>
      <g filter={`url(#${id}s)`}>
        <path d="M1110 44H1425V200L1360 206 1265 140 1205 200 1120 130 1095 90z" fill="#b13f60" />
        <path d="M890 290L1000 235 1165 255 1160 300 1080 375 990 410 900 350z" fill="#d93c5c" />
        <path d="M1270 265L1425 215V380L1350 450 1230 520 1150 470 1180 390z" fill="#bb3d5c" />
        <path d="M95 95L155 110 125 230 70 200z" fill="#d54a66" />
        <path d="M820 44H1010L930 100 850 125z" fill="#d64562" />
        <path d="M560 60L635 60 640 110 580 180 540 250 490 170z" fill="#c64d67" />
        <path d="M300 44H560L520 90 430 95 380 60z" fill="#c84a65" />
        <path d="M1000 620L1100 440 1180 390 1060 420 1010 540 930 700 960 720z" fill="#b64562" />
        <path d="M840 120L930 100 940 150 880 185 835 170z" fill="#a94562" />
        <path d="M395 655L460 650 480 700 400 715zM430 180L490 190 480 260 430 250z" fill="#e14260" />
        <path d="M510 1070L545 1020 600 1020 560 1100 520 1105z" fill="#dc4764" />
        <path d="M340 840L410 850 520 960 580 1000 400 960z" fill="#c24460" />
        <path d="M1240 910L1295 900 1290 940 1245 950zM780 1140L810 1160 780 1290 750 1270z" fill="#b84058" />
      </g>
      <rect x="45" y="44" width="1380" height="1478" filter={`url(#${id}b)`} opacity=".3" />
      <g filter={`url(#${id}s)`} opacity=".92">
        <path d="M1265 142L1357 207 1270 262 1215 205z" fill="#7f9290" />
        <path d="M1200 212L1262 268 1115 417 1078 380 1160 320 1175 240z" fill="#7f8f8f" />
        <path d="M745 60L830 80 845 150 815 215 740 200 770 150 720 165z" fill="#7d8f90" />
        <path d="M1000 44H1100L1080 90 1120 130 1200 205 1145 245 1000 205 960 140 920 200 870 270 840 200 900 170 960 100z" fill="#7b8f8d" />
        <path d="M920 180L945 145 960 205z" fill="#a94562" />
        <path d="M855 360L940 400 980 460 960 500 900 440 825 455z" fill="#819593" />
        <path d="M135 530L180 490 240 510 275 560 210 580 140 560z" fill="#81908f" />
        <path d="M300 400L330 300 410 340 340 440z" fill="#857484" />
        <path d="M565 800L620 810 640 860 600 860z" fill="#829494" />
      </g>
      <g filter={`url(#${id}s)`} opacity=".7">
        <path d="M1165 420L1160 540 1060 730 900 900 860 930 1010 740 1000 700 1100 470z" fill="#71858c" />
        <path d="M1225 590L1260 600 1200 730 1150 800 1040 850 1130 720z" fill="#7f9ca2" />
        <path d="M1100 900L1060 1000 1040 1200 1060 1400 1030 1480 960 1440 1000 1000z" fill="#607985" />
      </g>
      <g>
        {specks.map((s, i) => <rect key={i} x={s.x} y={s.y} width={s.w} height={s.h} fill={s.c} opacity={s.o} transform={`rotate(${s.r} ${s.x} ${s.y})`} />)}
        <g filter={`url(#${id}s)`}>
          <path d="M1020 985l30 8-22 85-25-6zM695 1345l22 0-12 38-15-5zM50 620h50l-15 25H48zM90 680l22 0 2 32-22-2zM1350 675l35 8-8 22-27-8z" fill="#b9ecf0" />
          <path d="M385 760l38-8 2 28-36 8zM408 800l30 0 5 30-25-2zM825 300l45-8 5 20-45 5z" fill="#a3bcb8" />
          <path d="M255 632h40v20h-32M232 665h30v22h-30" stroke="#a09a58" strokeWidth="7" />
        </g>
      </g>
      <g filter={`url(#${id}s)`} strokeLinejoin="round">
        <g stroke="#3a4460" strokeWidth="12">
          <path d="M600 44C575 95 500 105 430 96 380 60 330 50 290 56 240 80 200 150 175 190 150 230 160 265 200 310 240 350 262 390 245 430 210 490 160 480 135 515 122 550 128 570 135 598" />
          <path d="M636 44C640 75 640 100 605 130 570 160 560 210 520 255 470 300 420 360 380 420 340 460 300 490 293 560L300 578" strokeWidth="9" />
          <path d="M45 617L110 608 200 595 300 580C360 590 392 630 386 700 384 740 375 760 355 780" />
          <path d="M110 612C170 670 230 700 295 770M365 800L395 828C450 860 520 930 590 948L740 964 930 980" strokeWidth="10" />
          <path d="M290 795C240 805 210 840 202 880 198 940 195 970 175 1000 140 1035 130 1060 132 1100 110 1135 80 1160 45 1170" strokeWidth="8" />
          <path d="M1105 44C1090 100 1120 140 1200 195" strokeWidth="8" />
          <path d="M750 965C735 1080 720 1140 690 1190 650 1250 640 1290 625 1370" strokeWidth="19" />
        </g>
        <path d="M290 755L330 790 370 805 285 805 250 815 285 785z" fill="#37455c" />
        <path d="M1180 525L1245 550 1235 580 1168 555zM1150 570L1218 595 1150 720 1080 760 1045 850 940 905 915 920 1000 840 1080 700z" fill="#2d344e" />
        <path d="M1425 390V545L1300 720 1210 880C1150 980 1130 1060 1122 1180 1125 1290 1140 1390 1192 1522H1110C1060 1420 1045 1290 1040 1150 1050 1030 1080 940 1110 865L1010 960 1000 1060 910 1110 800 1390 765 1400 900 1070 910 1020 845 1060 830 1045 940 975 1060 885 1170 790 1250 650z" fill="#2f506b" />
        <path d="M905 1080L925 1090 795 1395 768 1408zM975 1060L990 1060 965 1200 962 1300 958 1435 938 1435 922 1330 935 1200z" fill="#30445f" />
        <path d="M1425 680V770L1330 920 1185 1210 1185 1265 1155 1190 1290 980 1370 790zM1425 890V1000L1330 1120 1315 1110 1400 900z" fill="#2d3450" />
        <path d="M625 1365L700 1522H640L610 1450 545 1522H505L590 1420z" fill="#3a4a62" />
        <path d="M345 325l22 5-10 40-22-5zM205 355l25 12 5 30-20-8zM1345 435l10 8-50 85-15-10z" fill="#39415c" />
      </g>
      <path d="M1425 350C1330 480 1270 600 1180 780M1425 560L1230 880C1150 1000 1125 1200 1170 1400M1240 235l40 30M1300 330l125-30" stroke="#a64a66" strokeWidth="5" opacity=".8" />
      <path d="M1030 1010l2 330-60 140M1170 1420l255-120M1130 1510l250-80M720 980l-20 400 60 110 170 30 190-80" stroke="#788790" strokeWidth="5" opacity=".5" />
    </g>
    {dim && <rect x="45" y="44" width="1380" height="1478" fill="#000" opacity=".5" />}
  </svg>
);

const BirdFrame = styled.div`
  position: relative;
  width: 161px;
  height: 201px;
  border: 1px solid #ffb40a;
`;

const Corner = styled.span`
  position: absolute;
  width: 5px;
  height: 5px;
  border: 1px solid #f00;
  ${(p) => p.$y}: -2px;
  ${(p) => p.$x}: ${(p) => (p.$x === "left" ? -1 : -2)}px;
`;

const Chart = () => (
  <svg width="222" height="119" viewBox="0 0 222 119" fontFamily="DejaVu Sans" fontSize="6" fontWeight="bold">
    <rect x="34" y="18" width="182" height="80" fill="#fff" stroke="#d2d2d2" />
    {[80, 70, 60, 50, 40, 30, 20, 10, 0].map((v, i) => (
      <g key={v}>
        <path d={`M34 ${23.500 + i * 9.300}H216`} stroke="#e6e6e6" strokeDasharray="2 2" />
        <text x="31" y={26 + i * 9.300} textAnchor="end">{v}</text>
        <path d={`M32 ${23.500 + i * 9.300}h2`} stroke={GREY} />
      </g>
    ))}
    <path d="M34 18v80h182" fill="none" stroke={GREY} />
    <path d="M43 21v77" stroke="#f00" strokeWidth="2" />
    <path d="M125.500 21v77" stroke="#0f0" strokeWidth="2" />
    <path d="M208 21v77" stroke="#00f" strokeWidth="2" />
    <path d="M43 43l82-10 83-11" fill="none" stroke="#444" />
    <path d="M40 41h5v4h-5zM123 31h5v4h-5zM205 20h5v4h-5z" />
    <text x="43" y="105" textAnchor="middle">1</text>
    <text x="126" y="105" textAnchor="middle">2</text>
    <text x="209" y="105" textAnchor="middle">3</text>
    <text x="125" y="114" fontSize="7" textAnchor="middle">Bandes</text>
    <text transform="translate(16 68) rotate(-90)" fontWeight="normal">Value</text>
    <path d="M16 79h7M119 102h7" stroke="#000" />
  </svg>
);

/* ---------- pieces ---------- */

const Tool = ({ label, children }) => <ToolButton type="button" aria-label={label}>{children}</ToolButton>;

const FrameHeader = ({ name, active }) => {
  const c = active ? BLUE : "#333";
  return (
    <FrameTitle $active={active}>
      <FrameIcon />
      <FrameName>{name}</FrameName>
      <Grip $active={active} />
      <FrameButton type="button" aria-label="Minimize"><MinFrame c={c} /></FrameButton>
      <FrameButton type="button" aria-label="Maximize" $gap={4}><MaxFrame c={c} /></FrameButton>
      <FrameButton type="button" aria-label="Close" $gap={12}><CloseFrame c={c} /></FrameButton>
    </FrameTitle>
  );
};

const Combo = ({ id, value, w, disabled, focused }) => (
  <SelectBox $w={w}>
    <SelectField id={id} disabled={disabled} $focused={focused} defaultValue={value}><option>{value}</option></SelectField>
    <Arrow c={disabled ? SOFT : "#000"} />
  </SelectBox>
);

const Collapsible = ({ title, children, extra }) => (
  <Section>
    <SectionHead>
      <SectionName>{title}</SectionName>
      <Chevron type="button" aria-label="Collapse"><ChevronsUp /></Chevron>
    </SectionHead>
    <SectionBody>{children}</SectionBody>
    {extra}
  </Section>
);

const Strategy = ({ label, h, checked, children }) => (
  <RadioRow $h={h}>
    <RadioLabel><Radio type="radio" name="strategy" defaultChecked={checked} />{label}</RadioLabel>
    {children}
  </RadioRow>
);

const params = [
  ["Learning method", "button", "Config."],
  ["Initialisation method", "button", "Config."],
  ["# clusters", "text", "10"],
  ["Cluster quality", "select", "WG"],
  ["Fuzzy", "check"],
  ["Phi", "off", ".5"],
  ["Alpha", "off", "3"],
  ["# generations", "text", "20"],
  ["# individuals", "text", "20"],
  ["# rep. ind.", "text", "1"],
  ["Execution", "select", "P2P-MPI", true],
  ["# CPU", "text", "2"],
];

const ParamControl = ({ id, kind, value, focused }) => {
  if (kind === "button") return <PushButton id={id} type="button">{value}</PushButton>;
  if (kind === "select") return <Combo id={id} value={value} focused={focused} />;
  if (kind === "check") return <CheckCell><Check id={id} type="checkbox" /></CheckCell>;
  return <TextField id={id} defaultValue={value} disabled={kind === "off"} />;
};

export default function App() {
  return (
    <Screen>
      <GlobalStyle />
      <Window>
        <TitleBar>
          <JavaIcon />
          <TitleText>Mustic v2.0</TitleText>
          <TitleButtons>
            <TitleButton aria-label="Minimize"><svg width="12" height="12"><path d="M2 8h8v3H2z" fill="#fff" stroke="#4368a0" /></svg></TitleButton>
            <TitleButton aria-label="Maximize"><svg width="12" height="12" fill="none"><path d="M2.500 2.500h7v7h-7z" stroke="#4368a0" strokeWidth="3" /><path d="M2.500 2.500h7v7h-7z" stroke="#fff" strokeWidth="1.500" /></svg></TitleButton>
            <TitleButton aria-label="Close"><svg width="12" height="12"><path d="M2 2l8 8m0-8l-8 8" stroke="#4368a0" strokeWidth="4" /><path d="M2 2l8 8m0-8l-8 8" stroke="#fff" strokeWidth="2.500" /></svg></TitleButton>
          </TitleButtons>
        </TitleBar>

        <Bars>
          <MenuBar>
            {["File", "Tools", "Image/ARFF", "View", "Result", "Help"].map((m) => <MenuItem key={m} href="#">{m}</MenuItem>)}
          </MenuBar>
          <ToolBar>
            <ToolGroup $after={14}>
              <ToolLabel $w={94}>Fichier Image :</ToolLabel>
              <Tool label="New"><NewIcon /></Tool>
              <Tool label="Open"><FolderIcon /></Tool>
              <Tool label="Close image"><CloseIcon /></Tool>
            </ToolGroup>
            <ToolGroup>
              <ToolLabel $w={69}>Affichage :</ToolLabel>
              <WarnIcon />
              <Tool label="Zoom in"><ZoomIcon /></Tool>
              <Tool label="Zoom out"><ZoomIcon minus /></Tool>
            </ToolGroup>
            <ToolGroup>
              <Tool label="More B"><SignIcon letter="B" /></Tool>
              <Tool label="Less B"><SignIcon letter="B" minus /></Tool>
            </ToolGroup>
            <ToolGroup>
              <Tool label="More C"><SignIcon letter="C" /></Tool>
              <Tool label="Less C"><SignIcon letter="C" minus /></Tool>
            </ToolGroup>
            <ToolGroup><Tool label="Undo"><UndoIcon /></Tool></ToolGroup>
            <ToolGroup><Tool label="Colours"><RgbIcon /></Tool></ToolGroup>
            <ToolGroup $after={14}><Tool label="Refresh"><RefreshIcon /></Tool></ToolGroup>
            <ToolGroup $after={14}>
              <ToolLabel $w={67}>Donnees :</ToolLabel>
              <Tool label="Select area"><SelectAreaIcon /></Tool>
              <Tool label="Edit picture"><PictureEditIcon /></Tool>
            </ToolGroup>
            <ToolGroup>
              <ToolLabel $w={67}>Resultats :</ToolLabel>
              <Tool label="Open result"><FolderIcon c1="#2fbb46" c2="#9cf0a0" c3="#137a28" /></Tool>
              <Tool label="Save result"><DiskIcon /></Tool>
              <Tool label="Browse"><BrowseIcon /></Tool>
              <Tool label="Filter"><FilterIcon /></Tool>
              <Tool label="Extract"><GlobeCutIcon /></Tool>
              <Tool label="Hierarchy"><TreeIcon /></Tool>
            </ToolGroup>
          </ToolBar>
        </Bars>

        <Main>
          <SideColumn>
            <Panel $flex="1">
              <PanelTitle>Project</PanelTitle>
              <Tree>
                <TreeStem />
                <svg width="15" height="17" viewBox="0 0 15 17"><path d="M2 2h7l4 4v10H2z" fill="#fff" stroke="#555" strokeWidth="1.300" /><path d="M9 2v4h4" fill="none" stroke="#555" /></svg>
                <TreeLabel>rob89.tif (1;2;3)</TreeLabel>
              </Tree>
            </Panel>
            <Panel>
              <PanelTitle>Infos</PanelTitle>
              <InfoBody>
                <InfoTop>
                  <InfoIconBox><InfoIcon /></InfoIconBox>
                  <InfoText>
                    <div>Pixel: 151 - 131</div>
                    <SmallNote>no georeferencing</SmallNote>
                  </InfoText>
                  <CubeButton type="button" aria-label="Classes"><Cubes /></CubeButton>
                </InfoTop>
                <Chart />
              </InfoBody>
            </Panel>
            <Panel>
              <PanelTitle>BirdView</PanelTitle>
              <BirdBody>
                <BirdFrame>
                  <Satellite id="bird" width={159} height={199} dim />
                  <Corner $x="left" $y="top" /><Corner $x="right" $y="top" />
                  <Corner $x="left" $y="bottom" /><Corner $x="right" $y="bottom" />
                </BirdFrame>
              </BirdBody>
            </Panel>
          </SideColumn>

          <Panel>
            <PanelTitle>Desktop</PanelTitle>
            <DesktopArea>
              <Frame $gap={2}>
                <FrameHeader name="rob89.tif" />
                <TabStrip><Tab type="button">rob89.tif</Tab><TabRest /></TabStrip>
                <ImagePane><Satellite id="main" width={460} height={575} /></ImagePane>
              </Frame>
              <Frame>
                <FrameHeader name="Classifier" active />
                <ClassifierBody>
                  <Group $grow $row $pad="4px 3px 3px 2px">
                    <GroupTitle>Method</GroupTitle>
                    <Viewport>
                      <Scrolled>
                        <Collapsible title="Method">
                          <Strategy label="Single strategy" h={31}>
                            <Inline htmlFor="km">- method</Inline>
                            <Combo id="km" value="K-MEANS" w="146px" disabled />
                            <Inline htmlFor="d1" $left={7}>- data</Inline>
                            <Combo id="d1" value="rob89.tif" w="96px" disabled />
                          </Strategy>
                          <Strategy label="Multi strategy (Samarah method)" />
                          <Strategy label="Multi strategy &amp; multi source (work in progress)" />
                          <Strategy label="Attribute weighting (MACLAW method)" checked />
                          <Strategy label="Voting approach" h={31}>
                            <Inline htmlFor="d2" $left={16}>- data</Inline>
                            <Combo id="d2" value="rob89.tif" w="96px" disabled />
                          </Strategy>
                        </Collapsible>

                        <Collapsible
                          title="Classifier parameters"
                          extra={<Pointer width="14" height="21" viewBox="0 0 14 21"><path d="M1 1v16l4-4 3 7 2.500-1L8 12.500h5z" fill="#fff" stroke="#000" /></Pointer>}
                        >
                          <ParamGrid>
                            {params.map(([label, kind, value, focused], i) => (
                              <React.Fragment key={label}>
                                <ParamLabel htmlFor={`p${i}`}>{label}</ParamLabel>
                                <ParamControl id={`p${i}`} kind={kind} value={value} focused={focused} />
                              </React.Fragment>
                            ))}
                          </ParamGrid>
                        </Collapsible>

                        <Collapsible title="Attributes selection and weigths configuration">
                          <VisualizeRow>
                            <PushButton type="button" $w="149px" $h={29}>Visualize bandes</PushButton>
                            <HelpIcon />
                          </VisualizeRow>
                          <WeightTable>
                            <thead><tr><th>Attribute names</th><th>Attribute weights</th></tr></thead>
                            <tbody>
                              <tr>
                                <td><BandLabel><Check type="checkbox" defaultChecked />Band 1</BandLabel></td>
                                <td><TextField $w="110px" defaultValue="1" aria-label="Weight of band 1" /></td>
                              </tr>
                              <tr>
                                <td><Check type="checkbox" aria-label="Band 2" /></td>
                                <td><TextField $w="110px" aria-label="Weight of band 2" /></td>
                              </tr>
                            </tbody>
                          </WeightTable>
                        </Collapsible>
                      </Scrolled>
                    </Viewport>
                    <ScrollTrack>
                      <ScrollArrow type="button" aria-label="Scroll up"><Arrow up /></ScrollArrow>
                      <ScrollThumb><ThumbGrip $active /></ScrollThumb>
                      <ScrollRest />
                      <ScrollArrow type="button" aria-label="Scroll down" $down><Arrow /></ScrollArrow>
                    </ScrollTrack>
                  </Group>

                  <Group $pad="3px 2px 1px">
                    <GroupTitle>Computation</GroupTitle>
                    <ComputeRow $h={29}>
                      <ComputeLabel><Check type="checkbox" />Remote computation</ComputeLabel>
                      <HelpIcon />
                      <WarnIcon />
                      <PushButton type="button" $w="35px" $h={28} aria-label="Settings"><GearIcon /></PushButton>
                      <PushRight />
                      <PushButton type="button" $w="86px" disabled>Parameters</PushButton>
                    </ComputeRow>
                    <ComputeRow $h={19}>
                      <ComputeLabel><Check type="checkbox" />show time execution</ComputeLabel>
                    </ComputeRow>
                  </Group>

                  <Group $row $pad="4px 2px 3px">
                    <GroupTitle>Open/Save</GroupTitle>
                    <PushButton type="button" $w="299px" $h={28}><FolderIcon />Open parameters</PushButton>
                    <PushButton type="button" $w="299px" $h={28}><DiskIcon s={22} />Save parameters</PushButton>
                  </Group>

                  <PushButton type="button" $w="61px" $center>Classify</PushButton>
                </ClassifierBody>
              </Frame>
            </DesktopArea>
          </Panel>
        </Main>

        <StatusBar>
          <span>Ready</span>
          <Progress>0 %</Progress>
        </StatusBar>
      </Window>

      <Taskbar>
        <Tray $gap={3} $after={12}><Runner /><Capture /></Tray>
        <Tray $after={18}><LockScreen /></Tray>
        <Tray $gap={18} $after={31}>
          <TaskLink href="#"><Ubuntu />Applications</TaskLink>
          <TaskLink href="#">Raccourcis</TaskLink>
          <TaskLink href="#">Système</TaskLink>
        </Tray>
        <Tray $gap={16} $after={12}><HomeFolder /><Term /></Tray>
        <Tray $gap={8} $after={14}><Fox /><Bird /></Tray>
        <Tray $gap={1} $after={39}><KIcon /><Speaker /><Calc /></Tray>
        <Tray $after={17}>
          <PagerCell><Bird s={17} /></PagerCell>
          <PagerCell><Fox s={17} /></PagerCell>
          <PagerCell $bg="#cfe0f7" $soft><JavaIcon s={16} /></PagerCell>
          <PagerCell $bg="#a6a4a2" $soft><EmptyDesk /></PagerCell>
        </Tray>
        <Handle />
        <Task type="button"><Term s={18} />Terminal</Task>
        <Task type="button"><Eclipse />Java - Eclipse Platform</Task>
        <Task type="button" $active><JavaIcon s={18} />Mustic v2.0</Task>
        <Clock>lun. 23 nov., 13:12</Clock>
        <Torn />
      </Taskbar>
    </Screen>
  );
}
